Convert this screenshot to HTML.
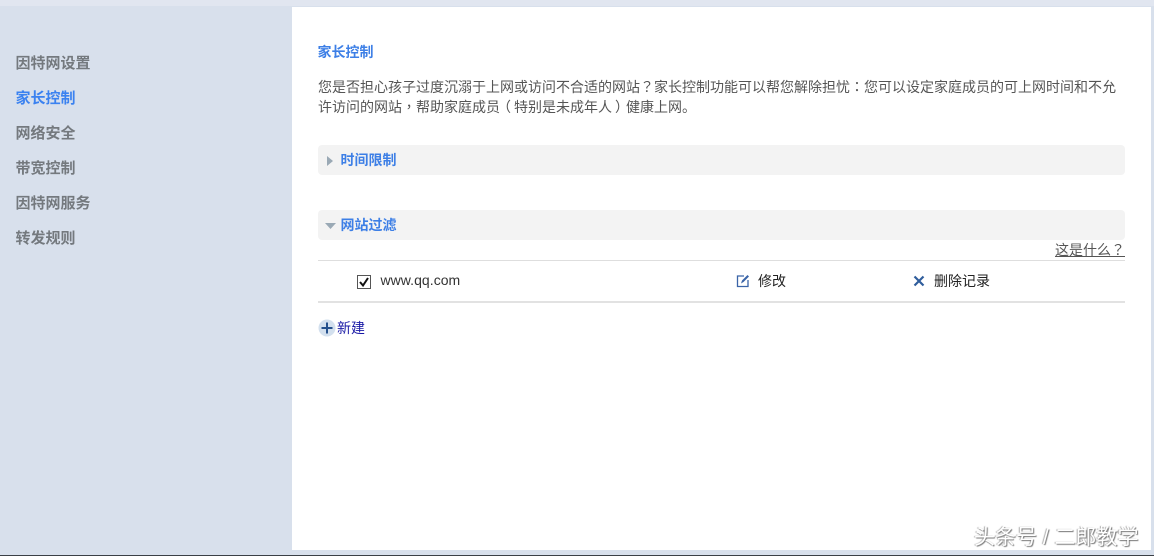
<!DOCTYPE html>
<html lang="zh">
<head>
<meta charset="utf-8">
<title>家长控制</title>
<style>
html,body{margin:0;padding:0}
body{width:1154px;height:556px;position:relative;overflow:hidden;background:#d8e0ec;font-family:"Liberation Sans","Noto Sans CJK SC",sans-serif}
div,svg{position:absolute}
.t{white-space:nowrap;line-height:20px;height:20px}
.nav{left:15.500px;font-size:15px;font-weight:bold;color:#74797e}
.bar{left:318px;width:807px;height:30px;background:#f3f3f3;border-radius:4px}
.sec{left:340.500px;font-size:14px;font-weight:bold;color:#3d7fe6}
.p{left:318px;font-size:14px;color:#555}
.c{font-family:"Noto Sans CJK TC",sans-serif}
</style>
</head>
<body>
<div style="left:0;top:0;width:1154px;height:6px;background:#e1e6f0"></div>
<div style="left:291.500px;top:6.500px;width:859.500px;height:543.500px;background:#fff"></div>
<div style="left:0;top:555px;width:1154px;height:1px;background:#3a3f45"></div>

<div class="t nav" style="top:54px">因特网设置</div>
<div class="t nav" style="top:89px;color:#3b82f0">家长控制</div>
<div class="t nav" style="top:124px">网络安全</div>
<div class="t nav" style="top:159px">带宽控制</div>
<div class="t nav" style="top:194px">因特网服务</div>
<div class="t nav" style="top:229px">转发规则</div>

<div class="t" style="left:317.500px;top:42px;font-size:14px;font-weight:bold;color:#3d7fe6">家长控制</div>
<div class="t p" style="top:77px">您是否担心孩子过度沉溺于上网或访问不合适的网站<span class="c" lang="zh-TW">？</span>家长控制功能可以帮您解除担忧<span class="c" lang="zh-TW">：</span>您可以设定家庭成员的可上网时间和不允</div>
<div class="t p" style="top:97px">许访问的网站<span class="c" lang="zh-TW">，</span>帮助家庭成员<span class="c" lang="zh-TW" style="position:relative;left:-3px">（</span>特别是未成年人<span class="c" lang="zh-TW" style="position:relative;left:3px">）</span>健康上网。</div>

<div class="bar" style="top:145px"></div>
<svg style="left:326px;top:155px" width="8" height="12"><path d="M1 1L7 6L1 11Z" fill="#9aa9b5"/></svg>
<div class="t sec" style="top:150px">时间限制</div>

<div class="bar" style="top:210px"></div>
<svg style="left:325px;top:223px" width="12" height="7"><path d="M0 0H11L5.500 6Z" fill="#9aa9b5"/></svg>
<div class="t sec" style="top:215px">网站过滤</div>

<div class="t" style="left:1055px;top:240px;font-size:14px;color:#555;text-decoration:underline">这是什么<span class="c" lang="zh-TW">？</span></div>

<div style="left:318px;top:260px;width:807px;height:1px;background:#dedede"></div>
<div style="left:318px;top:301px;width:807px;height:2px;background:#e2e2e2"></div>

<svg style="left:357px;top:275px" width="14" height="14" viewBox="0 0 14 14"><rect x="0.500" y="0.500" width="13" height="13" fill="#fff" stroke="#555"/><path d="M3 7L6 10.500L11 3" fill="none" stroke="#111" stroke-width="2"/></svg>
<div class="t" style="left:380.500px;top:270px;font-size:14px;letter-spacing:.04px;color:#333">www.qq.com</div>

<svg style="left:736px;top:274px" width="14" height="14" viewBox="0 0 14 14"><path d="M8 2H1.500V12.500H12V6" fill="none" stroke="#3a64a8" stroke-width="1.300"/><path d="M5 9.500L6 6.500L11.500 1L13 2.500L7.500 8Z" fill="#3a64a8"/></svg>
<div class="t" style="left:758px;top:271px;font-size:14px;color:#222">修改</div>

<svg style="left:913px;top:275px" width="12" height="12" viewBox="0 0 12 12"><path d="M1.500 1.500L10.500 10.500M10.500 1.500L1.500 10.500" stroke="#2f5d9c" stroke-width="2.200"/></svg>
<div class="t" style="left:934px;top:271px;font-size:14px;color:#222">删除记录</div>

<svg style="left:318px;top:319px" width="18" height="18" viewBox="0 0 18 18"><circle cx="9" cy="9" r="8.500" fill="#d3e0ee"/><path d="M9 3.500V14.500M3.500 9H14.500" stroke="#24508c" stroke-width="2"/></svg>
<div class="t" style="left:337px;top:318px;font-size:14px;color:#1a1aa6">新建</div>

<div class="t" style="left:974px;top:528px;font-size:21px;line-height:20px;height:20px;color:#fff;text-shadow:1px 1px 1px #777,-1px 0 1px #aaa">头条号 / 二郎教学</div>
</body>
</html>
